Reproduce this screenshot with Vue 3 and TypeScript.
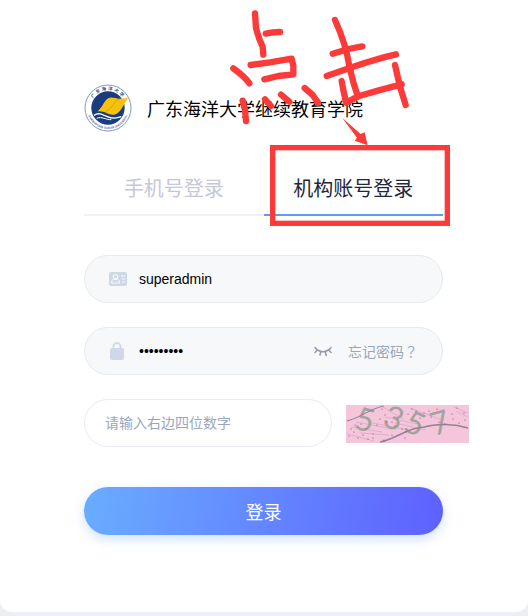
<script setup lang="ts">
import { ref } from 'vue'

type TabKey = 'phone' | 'account'

const tabs: { key: TabKey; label: string }[] = [
  { key: 'phone', label: '手机号登录' },
  { key: 'account', label: '机构账号登录' },
]
const active = ref<TabKey>('account')
const username = ref('superadmin')
const password = ref('123456789')
const captcha = ref('')
const showPassword = ref(false)

// Scattered noise dots of the verification picture
const specks: [number, number][] = [
  [3, 31], [8, 27], [12, 33], [17, 30], [22, 34], [27, 29], [27, 33], [20, 24], [9, 20], [15, 19],
  [36, 4], [39, 10], [34, 14], [41, 17], [46, 17], [49, 21], [52, 14], [56, 24], [60, 27], [62, 9],
  [66, 4], [70, 6], [74, 13], [78, 8], [83, 6], [85, 12], [91, 4], [93, 17], [99, 19], [106, 9],
  [107, 14], [111, 3], [113, 18], [118, 8], [119, 15], [31, 20], [5, 24], [46, 30], [38, 35], [59, 33],
]
</script>

<template>
  <main class="card">
    <header class="brand">
      <svg class="logo" viewBox="0 0 144 144" role="img" aria-label="广东海洋大学">
        <defs>
          <path id="ring-top" d="M18 72A54 54 0 0 1 126 72" />
          <path id="ring-bottom" d="M9 72A63 63 0 0 0 135 72" />
        </defs>
        <circle cx="72" cy="72" r="69" fill="#fff" stroke="#8497c2" stroke-width="3" />
        <circle cx="72" cy="72" r="50" fill="#193b80" />
        <text class="ring-cn"><textPath href="#ring-top" startOffset="50%" text-anchor="middle">广东海洋大学</textPath></text>
        <text class="ring-en"><textPath href="#ring-bottom" startOffset="50%" text-anchor="middle">GUANGDONG OCEAN UNIVERSITY</textPath></text>
        <path d="M30 94C44 84 57 92 70 98S96 104 112 98" fill="none" stroke="#fff" stroke-width="4" />
        <path d="M38 103C53 96 66 108 82 107" fill="none" stroke="#fff" stroke-width="3" />
        <path d="M34 83C53 83 60 42 78 41C90 40 99 45 108 44L136 42C121 47 116 86 91 92C72 95 62 77 34 83Z" fill="#f6c20d" />
        <path d="M107 45C93 47 83 76 65 82" fill="none" stroke="#b99527" stroke-width="2" />
      </svg>
      <h1>广东海洋大学继续教育学院</h1>
    </header>

    <nav class="tabs" role="tablist">
      <button
        v-for="tab in tabs"
        :key="tab.key"
        type="button"
        role="tab"
        class="tab"
        :class="{ active: active === tab.key }"
        :aria-selected="active === tab.key"
        @click="active = tab.key"
      >{{ tab.label }}</button>
    </nav>

    <form class="form" @submit.prevent>
      <div class="field">
        <label for="username" aria-label="账号">
          <svg class="icon" viewBox="0 0 18 18">
            <rect y="2" width="18" height="14" rx="2" fill="#cfd8e8" />
            <g fill="none" stroke="#f6f8fa" stroke-width="1.2">
              <circle cx="6.5" cy="6.7" r="2.2" />
              <path d="M2.7 13V11.5Q3 9.5 5 9.5H8Q10 9.5 10.3 11.5V13ZM12 6h4M13 9h3M13 12h3" />
            </g>
          </svg>
        </label>
        <input id="username" v-model="username" type="text" autocomplete="off" />
      </div>

      <div class="field">
        <label for="password" aria-label="密码">
          <svg class="icon" viewBox="0 0 18 18">
            <rect x="1" y="6" width="14" height="12" rx="2" fill="#cfd8e8" />
            <path d="M4.5 8V4.5a3.5 3.5 0 0 1 7 0V8" fill="none" stroke="#cfd8e8" stroke-width="1.8" />
          </svg>
        </label>
        <input id="password" v-model="password" :type="showPassword ? 'text' : 'password'" autocomplete="off" />
        <button type="button" class="eye" aria-label="显示密码" @click="showPassword = !showPassword">
          <svg class="icon" viewBox="0 0 18 18">
            <path d="M1 5.5C5 11 13 11 17 5.5M3.3 8L1 10.5M6.8 9.5L6 13M11.2 9.5L12.3 13.5M14.7 8L17 10.5" fill="none" stroke="#9799a9" stroke-width="1.5" stroke-linecap="round" />
          </svg>
        </button>
        <a href="#" class="forgot">忘记密码<span class="mark">？</span></a>
      </div>

      <div class="captcha-row">
        <div class="field plain">
          <input v-model="captcha" type="text" aria-label="验证码" placeholder="请输入右边四位数字" autocomplete="off" />
        </div>
        <svg class="captcha" viewBox="0 0 123 38" role="img" aria-label="验证码图片">
          <rect width="123" height="38" fill="#f5c5da" />
          <g fill="none" stroke="#c9a0c8" stroke-width=".8" opacity=".75">
            <path d="M5 22L36 27M10 17L46 24M14 28L43 30M22 17L62 25M37 2L57 14M39 12L71 19M64 3L96 15M49 18L80 25M108 2L122 8M110 6L122 12M1 29L28 36" />
          </g>
          <g class="digits">
            <text transform="translate(7 23) rotate(16)">5</text>
            <text transform="translate(35 20) rotate(22)">3</text>
            <text transform="translate(56 25) rotate(24)">5</text>
            <text transform="translate(88 31) rotate(-16)">7</text>
          </g>
          <path d="M1 16C16 12 23 4 38 1" fill="none" stroke="#927f93" />
          <path d="M34 37C50 34 60 23 78 22C91 18 109 19 122 23" fill="none" stroke="#958394" stroke-width="1.6" />
          <circle v-for="([x, y], i) in specks" :key="i" :cx="x" :cy="y" r=".6" fill="#8b4474" />
        </svg>
      </div>

      <button type="submit" class="submit">登录</button>
    </form>

    <svg class="marker" viewBox="0 0 720 690" aria-hidden="true">
      <g fill="none" stroke="#fc3a3a" stroke-width="19" stroke-linecap="round" stroke-linejoin="round">
        <path d="M105 40L108 85L118 117L128 140L130 164M137 101L158 97L180 96" />
        <path d="M92 195L150 187L215 176L220 198L220 223L175 228L133 238M40 205C58 218 76 232 88 250" />
        <path d="M68 302L75 330L78 363M135 298L153 318M183 284L208 305M254 264L278 285L294 308" />
        <path d="M345 60C370 115 381 152 388 199L400 247L413 288M338 161L385 147L427 139" />
        <path d="M320 228L400 200Q475 175 528 163M365 243L370 270L378 308L415 289Q480 269 545 253M525 195L540 260L557 315" />
      </g>
      <path d="M367 354L422 402L434 397L443 436L404 422L411 413Z" fill="#fc3a3a" />
      <rect x="158" y="443" width="524" height="227" fill="none" stroke="#fc3a3a" stroke-width="16" />
    </svg>
  </main>
</template>

<style>
body {
  background: #eeeff5;
}
</style>

<style scoped>
.card {
  position: relative;
  box-sizing: border-box;
  padding: 84px 85px 77px 84px;
  background: #fff;
  border-radius: 0 0 12px 12px;
  font-family: "Liberation Sans", "Noto Sans CJK SC", sans-serif;
  overflow: hidden;
}
.brand {
  display: flex;
  align-items: center;
  gap: 15px;
}
.logo {
  width: 48px;
  height: 48px;
  flex: none;
}
.ring-cn {
  font: 700 13px "Noto Sans CJK SC", sans-serif;
  fill: #2b4b88;
  letter-spacing: 5px;
}
.ring-en {
  font: 700 9px "Liberation Sans", sans-serif;
  fill: #53699b;
}
h1 {
  margin: 0;
  padding-top: 4px;
  font-size: 18px;
  line-height: 24px;
  font-weight: 400;
  color: #000;
  white-space: nowrap;
}
button,
input {
  font-family: inherit;
  border: 0;
  padding: 0;
  background: none;
}
button {
  cursor: pointer;
}
.tabs {
  display: flex;
  margin-top: 28px;
}
.tab {
  flex: 1;
  height: 56px;
  font-size: 20px;
  color: #c6c8d6;
  border-bottom: 2px solid #f2f2f4;
}
.tab.active {
  color: #22283a;
  border-bottom-color: #5f9cf8;
}
.form {
  display: flex;
  flex-direction: column;
  gap: 24px;
  margin-top: 39px;
}
.field {
  display: flex;
  align-items: center;
  box-sizing: border-box;
  height: 48px;
  padding: 0 24px;
  border: 1px solid #e5ebee;
  border-radius: 24px;
  background: #f6f8fa;
}
.field label {
  display: flex;
  margin-right: 12px;
}
.icon {
  display: block;
  width: 18px;
  height: 18px;
}
.field input {
  flex: 1;
  min-width: 0;
  height: 24px;
  font-size: 14px;
  color: #000;
  outline: none;
}
.eye {
  margin-right: 16px;
}
.forgot {
  font-size: 14px;
  line-height: 24px;
  color: #99a7bd;
  text-decoration: none;
  white-space: nowrap;
}
.mark {
  font-family: "Noto Sans CJK TC", sans-serif;
}
.captcha-row {
  display: flex;
  align-items: center;
  gap: 14px;
  margin-right: -26px;
}
.field.plain {
  flex: 1;
  padding: 0 20px;
  background: #fff;
  border-color: #e9ebf5;
}
.field input::placeholder {
  color: #99a7bd;
  opacity: 1;
}
.captcha {
  width: 123px;
  height: 38px;
  flex: none;
  margin-top: 2px;
  overflow: visible;
}
.digits text {
  font: 32px Lato, sans-serif;
  fill: #a2a39e;
}
.submit {
  height: 48px;
  margin-top: 16px;
  border-radius: 24px;
  font-size: 18px;
  color: #fff;
  background: linear-gradient(100deg, #69adff, #5e60ff);
  box-shadow: 0 4px 12px rgba(94, 156, 255, 0.3);
}
.marker {
  position: absolute;
  left: 220px;
  top: 0;
  width: 240px;
  height: 230px;
  pointer-events: none;
}
</style>
